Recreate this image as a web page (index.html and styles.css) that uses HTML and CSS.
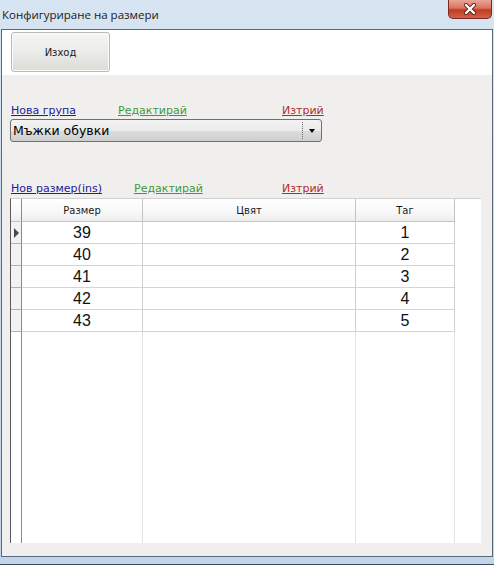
FILE: index.html
```html
<!DOCTYPE html>
<html>
<head>
<meta charset="utf-8">
<link rel="stylesheet" href="styles.css">
</head>
<body>
<div class="window">
  <div class="titlebar">
    <span class="title">Конфигуриране на размери</span>
    <div class="close">
      <svg width="16" height="12" viewBox="0 0 16 12"><path d="M4 2 L12 10 M12 2 L4 10" stroke="#5a2018" stroke-width="4" stroke-linecap="round"/><path d="M4 2 L12 10 M12 2 L4 10" stroke="#ffffff" stroke-width="2.4" stroke-linecap="round"/></svg>
    </div>
  </div>
  <div class="client">
    <div class="toppanel">
      <div class="btn">Изход</div>
    </div>
    <div class="main">
      <div class="links">
        <span class="cell w107"><a class="lnk blue">Нова група</a></span>
        <span class="cell w164"><a class="lnk green">Редактирай</a></span>
        <span class="cell"><a class="lnk red">Изтрий</a></span>
      </div>
      <div class="combo">
        <span class="combo-text">Мъжки обувки</span>
        <span class="combo-sep"></span>
        <span class="combo-arrow"></span>
      </div>
      <div class="links links2">
        <span class="cell w123"><a class="lnk blue">Нов размер(ins)</a></span>
        <span class="cell w148"><a class="lnk green">Редактирай</a></span>
        <span class="cell"><a class="lnk red">Изтрий</a></span>
      </div>
      <div class="grid">
        <div class="row head">
          <div class="rh"></div>
          <div class="c">Размер</div>
          <div class="c">Цвят</div>
          <div class="c">Таг</div>
        </div>
        <div class="row data">
          <div class="rh"><span class="arrow"></span></div>
          <div class="c">39</div><div class="c"></div><div class="c">1</div>
        </div>
        <div class="row data">
          <div class="rh"></div>
          <div class="c">40</div><div class="c"></div><div class="c">2</div>
        </div>
        <div class="row data">
          <div class="rh"></div>
          <div class="c">41</div><div class="c"></div><div class="c">3</div>
        </div>
        <div class="row data">
          <div class="rh"></div>
          <div class="c">42</div><div class="c"></div><div class="c">4</div>
        </div>
        <div class="row data">
          <div class="rh"></div>
          <div class="c">43</div><div class="c"></div><div class="c">5</div>
        </div>
        <div class="row filler">
          <div class="rh"></div>
          <div class="c"></div><div class="c"></div><div class="c"></div>
        </div>
      </div>
    </div>
  </div>
</div>
</body>
</html>
```
FILE: styles.css
```css
html, body {
  margin: 0;
  padding: 0;
  width: 494px;
  height: 565px;
  overflow: hidden;
  background: #c4d5e9;
}
.window {
  width: 494px;
  height: 565px;
  box-sizing: border-box;
  display: flex;
  flex-direction: column;
  padding: 0 1px 7px 1px;
  background: linear-gradient(to bottom, #d7e4f2 0%, #c8d9eb 60%, #c2d4e8 100%);
  border-bottom: 1px solid #3a4a5c;
}
.titlebar {
  height: 29px;
  flex: none;
  display: flex;
  align-items: flex-start;
  position: relative;
}
.title {
  font-family: "Open Sans", "Liberation Sans", sans-serif;
  font-size: 11.5px;
  color: #1a1a1a;
  margin-top: 7px;
  margin-left: 1px;
}
.close {
  margin-left: auto;
  margin-right: 1px;
  width: 44px;
  height: 19px;
  box-sizing: border-box;
  border: 1px solid #7a2a20;
  border-top: none;
  border-radius: 0 0 5px 5px;
  background: linear-gradient(to bottom, #e9a596 0%, #d9735f 45%, #c23b22 55%, #d0614a 100%);
  display: flex;
  align-items: center;
  justify-content: center;
}
.client {
  flex: 1;
  display: flex;
  flex-direction: column;
  border: 1px solid #56697f;
  background: #f0efee;
}
.toppanel {
  height: 45px;
  flex: none;
  background: #ffffff;
  padding: 2px 0 0 9px;
  box-sizing: border-box;
}
.btn {
  width: 99px;
  height: 40px;
  box-sizing: border-box;
  border: 1px solid #b9b9b6;
  border-radius: 3px;
  background: linear-gradient(to bottom, #f6f6f5 0%, #ebebe8 50%, #dcdcd6 100%);
  box-shadow: inset 0 0 0 1px #fbfbfb;
  display: flex;
  align-items: center;
  justify-content: center;
  font-family: "DejaVu Sans", sans-serif;
  font-size: 10px;
  color: #1a1a1a;
}
.main {
  flex: 1;
  padding: 29px 0 0 8px;
  display: flex;
  flex-direction: column;
}
.links {
  height: 14px;
  display: flex;
  align-items: center;
  padding-left: 1px;
  font-family: "DejaVu Sans", sans-serif;
  font-size: 11px;
  line-height: 14px;
}
.links2 {
  margin-top: 40px;
}
.cell { display: block; flex: none; }
.w107 { width: 107px; }
.w164 { width: 164px; }
.w123 { width: 123px; }
.w148 { width: 148px; }
.lnk { text-decoration: underline; }
.blue { color: #20209a; }
.green { color: #3c9a3c; }
.red { color: #b02c2c; }
.combo {
  margin-top: 1px;
  width: 312px;
  height: 23px;
  box-sizing: border-box;
  border: 1px solid #707070;
  border-radius: 3px;
  background: linear-gradient(to bottom, #f3f3f3 0%, #ebebeb 50%, #dddddd 51%, #cfcfcf 100%);
  display: flex;
  align-items: center;
}
.combo-text {
  flex: 1;
  padding-left: 2px;
  font-family: "DejaVu Sans", sans-serif;
  font-size: 12.5px;
  color: #000;
}
.combo-sep {
  width: 0;
  height: 17px;
  border-left: 1px dotted #6a6a6a;
}
.combo-arrow {
  width: 0;
  height: 0;
  margin: 0 6px 0 6px;
  border-left: 3.5px solid transparent;
  border-right: 3.5px solid transparent;
  border-top: 4px solid #000;
}
.grid {
  margin-top: 2px;
  width: 471px;
  height: 345px;
  box-sizing: border-box;
  background: #ffffff;
  border-left: 1px solid #5a5a5a;
  border-top: 1px solid #d0d0d0;
  display: flex;
  flex-direction: column;
}
.row {
  display: grid;
  grid-template-columns: 11px 121px 213px 99px;
  width: 444px;
}
.rh {
  box-sizing: border-box;
  border-right: 1px solid #8a8a8a;
  display: flex;
  align-items: center;
  justify-content: center;
}
.c {
  box-sizing: border-box;
  border-right: 1px solid #d0d0d0;
  display: flex;
  align-items: center;
  justify-content: center;
}
.head {
  height: 23px;
  background: linear-gradient(to bottom, #ffffff 0%, #f7f7f7 60%, #ececec 100%);
  font-family: "DejaVu Sans", sans-serif;
  font-size: 10px;
  color: #1a1a1a;
}
.head .c, .head .rh {
  border-bottom: 1px solid #c4c4c4;
}
.head .c { border-right-color: #c4c4c4; }
.data {
  height: 22px;
  font-family: "Liberation Sans", sans-serif;
  font-size: 16px;
  color: #111;
}
.data .c {
  border-bottom: 1px solid #d4d4d4;
  padding-top: 1px;
}
.data .rh {
  background: #f2f2f2;
  border-bottom: 1px solid #b0b0b0;
}
.arrow {
  width: 0;
  height: 0;
  border-top: 5px solid transparent;
  border-bottom: 5px solid transparent;
  border-left: 5px solid #4a4a4a;
}
.filler {
  flex: 1;
}
.filler .c { border-right-color: #e2e2e2; }
```
